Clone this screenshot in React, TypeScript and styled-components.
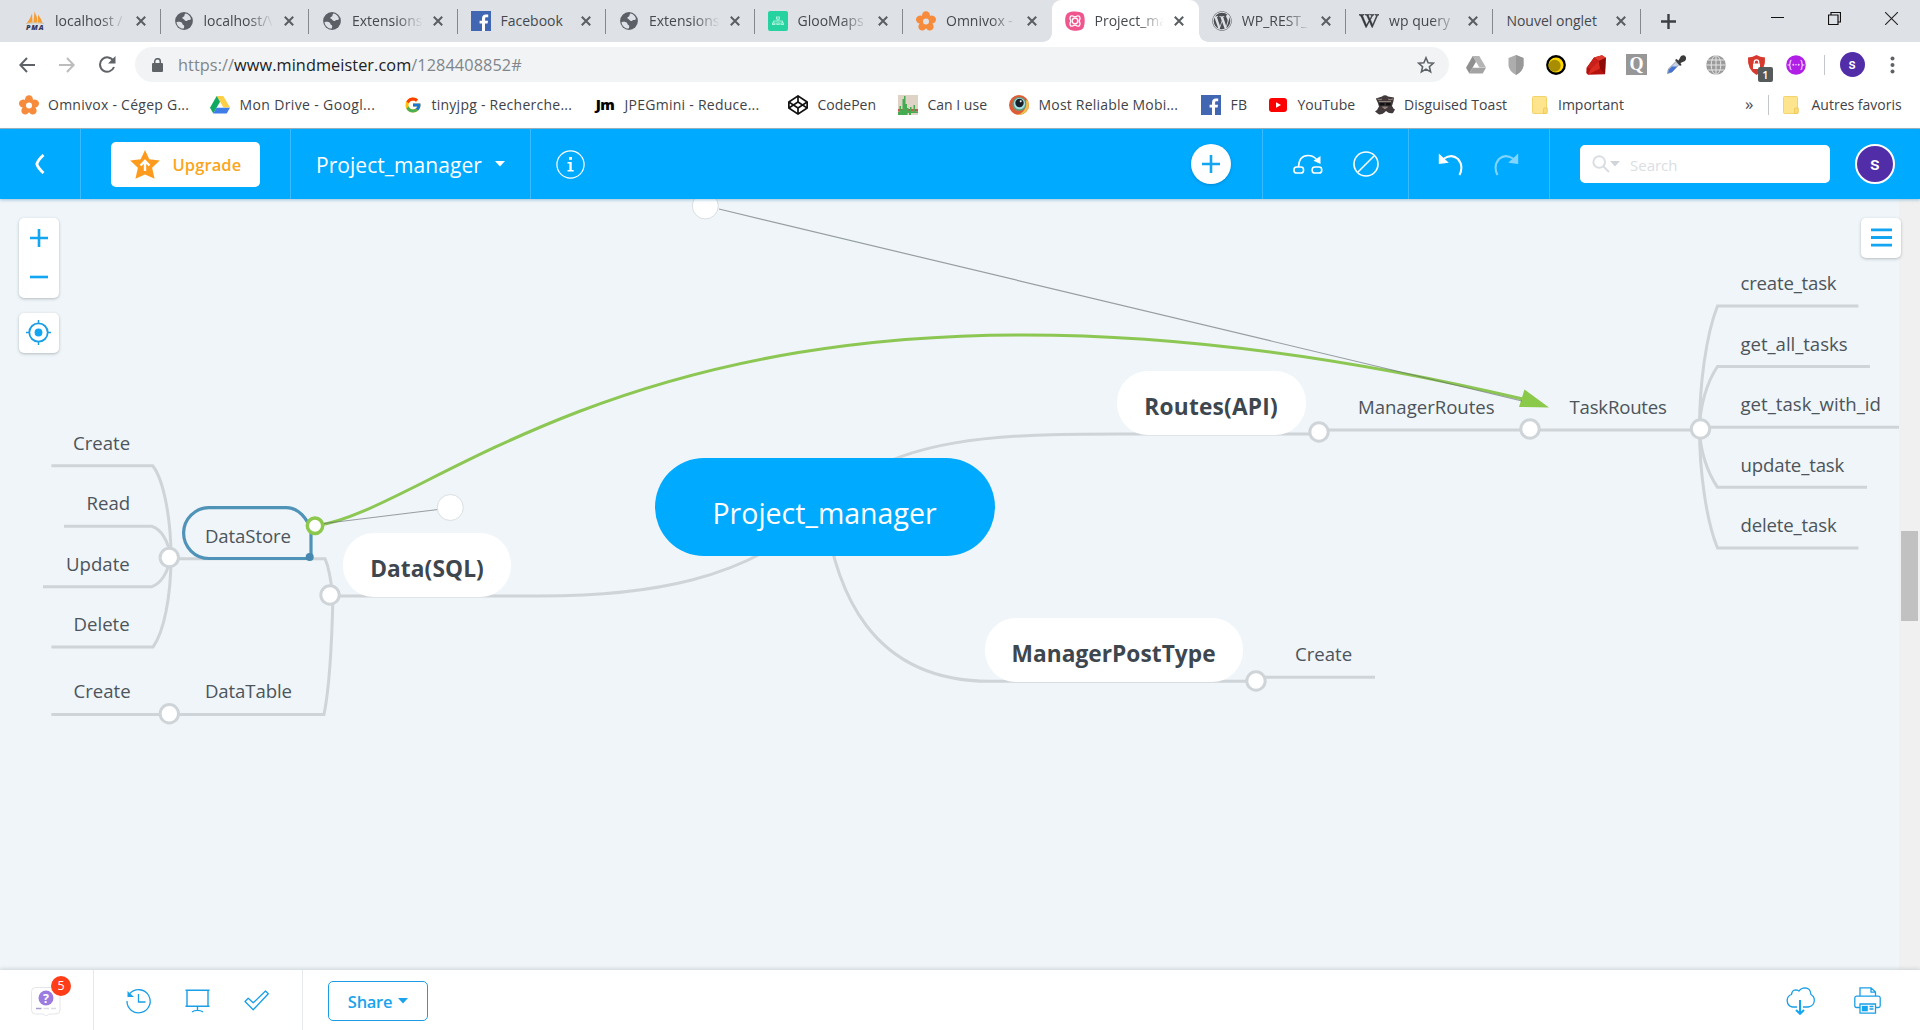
import React from 'react';
import styled, { createGlobalStyle, css } from 'styled-components';
import { FaWordpress, FaWikipediaW, FaCodepen } from 'react-icons/fa';
import { FcGoogle } from 'react-icons/fc';

const blue = '#00aaff';
const line = '#cfd4d8';
const ui = "'Open Sans', 'Noto Sans', sans-serif";

const Global = createGlobalStyle`
  * { box-sizing: border-box; }
  html, body { margin: 0; height: 100%; overflow: hidden; }
  body { font-family: ${ui}; background: #fff; }
  svg { display: block; flex: none; }
`;

const Screen = styled.div`
  width: 1920px;
  height: 1030px;
  display: flex;
  flex-direction: column;
  overflow: hidden;
`;

/* ---------- browser tabs ---------- */

const TabStrip = styled.div`
  height: 42px;
  flex: none;
  display: flex;
  align-items: stretch;
  background: #dee1e6;
  padding-left: 12px;
`;

const Tab = styled.div<{ $active?: boolean; $divider?: boolean; $narrow?: boolean }>`
  position: relative;
  width: ${p => (p.$narrow ? 147.3 : 148.5)}px;
  flex: none;
  display: flex;
  align-items: center;
  padding: 0 15px 0 13px;
  gap: 10px;
  ${p => p.$active && css`
    background: #fff;
    border-radius: 9px 9px 0 0;
    &::before, &::after {
      content: '';
      position: absolute;
      bottom: 0;
      width: 9px;
      height: 9px;
    }
    &::before { left: -9px; background: radial-gradient(circle at 0 0, transparent 8.5px, #fff 9px); }
    &::after { right: -9px; background: radial-gradient(circle at 100% 0, transparent 8.5px, #fff 9px); }
  `}
  ${p => p.$divider && css`
    &::after {
      content: '';
      position: absolute;
      right: 0;
      top: 9px;
      width: 1px;
      height: 25px;
      background: #85888c;
    }
  `}
`;

const TabTitle = styled.span<{ $fade?: boolean }>`
  flex: 1;
  min-width: 0;
  overflow: hidden;
  white-space: nowrap;
  font-size: 14px;
  line-height: 22px;
  color: #45494d;
  ${p => p.$fade && css`
    mask-image: linear-gradient(90deg, #000 62%, transparent 100%);
  `}
`;

const NewTab = styled.div`
  width: 55px;
  display: flex;
  align-items: center;
  justify-content: center;
`;

const WindowControls = styled.div`
  margin-left: auto;
  display: flex;
  height: 37px;
`;

const WindowButton = styled.div`
  width: 57px;
  display: flex;
  align-items: center;
  justify-content: center;
`;

/* ---------- address bar ---------- */

const Toolbar = styled.div`
  height: 45px;
  flex: none;
  display: flex;
  align-items: center;
  background: #fff;
`;

const NavButtons = styled.div`
  width: 135px;
  padding-left: 7px;
  display: flex;
`;

const ToolCell = styled.div<{ $w?: number }>`
  position: relative;
  width: ${p => p.$w ?? 40}px;
  height: 40px;
  flex: none;
  display: flex;
  align-items: center;
  justify-content: center;
`;

const Omnibox = styled.div`
  width: 1313.5px;
  height: 35px;
  flex: none;
  display: flex;
  align-items: center;
  border-radius: 18px;
  background: #f1f3f4;
  padding: 0 14px 0 17px;
  margin-right: 7.5px;
`;

const Url = styled.span`
  flex: 1;
  margin-left: 15px;
  font-size: 16.3px;
  line-height: 24px;
  letter-spacing: 0.07px;
  color: #80868b;
  b { font-weight: 400; color: #202124; }
`;

const CountBadge = styled.span`
  position: absolute;
  left: 22px;
  top: 22px;
  width: 15px;
  height: 15px;
  border-radius: 2px;
  background: #555a5a;
  color: #fff;
  font: 600 11px/15px ${ui};
  text-align: center;
`;

const Rule = styled.i<{ $h: number; $mr?: number }>`
  width: 1px;
  height: ${p => p.$h}px;
  margin-right: ${p => p.$mr ?? 0}px;
  background: #c4c7ca;
  flex: none;
`;

const Avatar = styled.div<{ $size: number; $ring?: number }>`
  width: ${p => p.$size}px;
  height: ${p => p.$size}px;
  flex: none;
  border-radius: 50%;
  border: ${p => p.$ring ?? 0}px solid #fff;
  background: #512da8;
  color: #fff;
  display: flex;
  align-items: center;
  justify-content: center;
  padding-bottom: 2px;
  font-family: Roboto, sans-serif;
  font-weight: 500;
  font-size: ${p => (p.$ring ? 19 : 14)}px;
`;

/* ---------- bookmarks ---------- */

const Bookmarks = styled.div`
  height: 42px;
  flex: none;
  display: flex;
  align-items: center;
  padding: 0 0 5px 18.5px;
  background: #fff;
  border-bottom: 1px solid #9fb3bf;
`;

const Bookmark = styled.div<{ $w: number; $gap?: number }>`
  width: ${p => p.$w}px;
  flex: none;
  display: flex;
  align-items: center;
  gap: ${p => p.$gap ?? 9.5}px;
`;

const BookmarkIcon = styled.span<{ $w?: number }>`
  width: ${p => p.$w ?? 20}px;
  height: 20px;
  flex: none;
  display: flex;
  align-items: center;
  justify-content: center;
`;

const BookmarkLabel = styled.span<{ $ls?: number }>`
  font-size: 14px;
  line-height: 20px;
  white-space: nowrap;
  letter-spacing: ${p => p.$ls ?? 0}px;
  color: #3f4347;
`;

const Jm = styled.b`
  font: 800 14.5px/20px ${ui};
  letter-spacing: -0.6px;
  color: #000;
`;

const Overflow = styled.span`
  width: 23px;
  font-size: 17px;
  line-height: 20px;
  padding-bottom: 3px;
  color: #4a4d51;
`;

const BookmarksEnd = styled.div`
  margin-left: auto;
  width: 175px;
  display: flex;
  align-items: center;
`;

/* ---------- app header ---------- */

const Header = styled.header`
  position: relative;
  z-index: 2;
  height: 70px;
  flex: none;
  display: flex;
  background: ${blue};
  box-shadow: 0 1px 3px rgba(0, 100, 160, 0.35);
`;

const HeaderCell = styled.div<{ $w?: number; $pl?: number; $rule?: boolean; $gap?: number }>`
  ${p => (p.$w ? `width: ${p.$w}px; flex: none;` : 'flex: 1;')}
  display: flex;
  align-items: center;
  padding-left: ${p => p.$pl ?? 0}px;
  gap: ${p => p.$gap ?? 0}px;
  border-right: ${p => (p.$rule ? 1 : 0)}px solid rgba(255, 255, 255, 0.22);
`;

const UpgradeButton = styled.div`
  width: 149px;
  height: 45px;
  border-radius: 5px;
  background: #fff;
  display: flex;
  align-items: center;
  padding-left: 19px;
  gap: 12.5px;
  color: #fba51c;
  font-size: 16.5px;
  font-weight: 600;
  letter-spacing: 0.1px;
`;

const MapTitle = styled.span`
  font-size: 21px;
  line-height: 28px;
  margin-top: 1px;
  letter-spacing: 0.05px;
  color: #fff;
`;

const RoundButton = styled.div`
  width: 40px;
  height: 40px;
  border-radius: 50%;
  background: #fff;
  display: flex;
  align-items: center;
  justify-content: center;
  box-shadow: 0 1px 3px rgba(0, 60, 110, 0.3);
`;

const SearchBox = styled.div`
  width: 250px;
  height: 38px;
  border-radius: 5px;
  background: #fff;
  display: flex;
  align-items: center;
  padding-left: 12px;
  color: #dadee3;
  font-size: 15px;
  span { margin: 2px 0 0 10px; }
`;

/* ---------- canvas ---------- */

const Workspace = styled.main`
  height: 771px;
  flex: none;
  display: flex;
`;

const Canvas = styled.div`
  position: relative;
  width: 1899px;
  background: #eff5f8;
`;

const Scrollbar = styled.div`
  width: 21px;
  background: #f0f0f0;
  padding: 332px 2px 0;
`;

const Thumb = styled.div`
  height: 90px;
  background: #c1c1c1;
`;

const Wires = styled.svg`
  position: absolute;
  inset: 0;
`;

const Float = styled.div<{ $x: number; $y: number; $h: number }>`
  position: absolute;
  left: ${p => p.$x}px;
  top: ${p => p.$y}px;
  width: 40px;
  height: ${p => p.$h}px;
  padding-bottom: 1px;
  display: flex;
  flex-direction: column;
  align-items: center;
  justify-content: space-around;
  background: #fff;
  border-radius: 5px;
  box-shadow: 0 1px 3px rgba(70, 80, 90, 0.35);
`;

const Topic = styled.div<{ $x: number; $y: number; $ls: number }>`
  position: absolute;
  left: ${p => p.$x}px;
  top: ${p => p.$y}px;
  font-size: 18.6px;
  line-height: 24px;
  white-space: nowrap;
  letter-spacing: ${p => p.$ls}px;
  color: #4d545b;
`;

const Branch = styled.div<{ $x: number; $y: number; $w: number; $ls: number }>`
  position: absolute;
  left: ${p => p.$x}px;
  top: ${p => p.$y}px;
  width: ${p => p.$w}px;
  height: 64px;
  border-radius: 31px;
  background: #fff;
  display: flex;
  justify-content: center;
  padding-top: 19px;
  font-size: 22.7px;
  font-weight: 700;
  line-height: 34px;
  letter-spacing: ${p => p.$ls}px;
  color: #3e464e;
`;

const Root = styled.div`
  position: absolute;
  left: 654.5px;
  top: 259.3px;
  width: 340px;
  height: 98px;
  border-radius: 49px;
  background: ${blue};
  display: flex;
  justify-content: center;
  padding-top: 34.7px;
  font-size: 28.5px;
  line-height: 40px;
  color: #fff;
`;

/* ---------- bottom bar ---------- */

const BottomBar = styled.footer`
  position: relative;
  z-index: 2;
  height: 60px;
  flex: none;
  display: flex;
  background: #fff;
  box-shadow: 0 -1px 4px rgba(60, 80, 90, 0.2);
`;

const BottomCell = styled.div<{ $w?: number; $pl?: number; $pr?: number; $gap?: number; $rule?: boolean }>`
  ${p => (p.$w ? `width: ${p.$w}px; flex: none;` : 'margin-left: auto;')}
  display: flex;
  align-items: center;
  padding: 1px ${p => p.$pr ?? 0}px 0 ${p => p.$pl ?? 0}px;
  gap: ${p => p.$gap ?? 0}px;
  border-right: ${p => (p.$rule ? 1 : 0)}px solid #e6eaed;
`;

const HelpBox = styled.div`
  position: relative;
  width: 31px;
  height: 30px;
`;

const Badge = styled.span`
  position: absolute;
  left: 20px;
  top: -10px;
  width: 20px;
  height: 20px;
  border-radius: 50%;
  background: #ff3d18;
  color: #fff;
  font-size: 12.5px;
  line-height: 20px;
  text-align: center;
`;

const ShareButton = styled.div`
  width: 100px;
  height: 40px;
  margin-top: 1px;
  border: 1px solid #1a9de4;
  border-radius: 5px;
  display: flex;
  align-items: center;
  justify-content: center;
  gap: 6px;
  color: #1aa3ec;
  font-size: 16.5px;
  font-weight: 600;
  letter-spacing: -0.3px;
`;

/* ---------- drawings ---------- */

const Close = () => (
  <svg width="10" height="10" viewBox="0 0 10 10"><path d="M.8.8l8.4 8.4M9.2.8L.8 9.2" stroke="#5a5e63" strokeWidth="2" /></svg>
);

const Pma = () => (
  <svg width="20" height="20" viewBox="0 0 20 20">
    <path d="M2 12Q5.500 7.500 7 2.500L7.500 11.500zM8.500 11.500L9.500.5Q12.500 6 12.500 11.500zM13 11.500V3.500Q16.500 8 17.500 12z" fill="#f59c33" />
    <path d="M1 12.500Q10 11 19 12.500" stroke="#c9b98f" strokeWidth=".7" fill="none" />
    <text x="1" y="18.800" fontFamily="Open Sans" fontWeight="800" fontStyle="italic" fontSize="7.200" fill="#33365e" textLength="17.500">PMA</text>
  </svg>
);

const Globe = () => (
  <svg width="20" height="20" viewBox="0 0 20 20">
    <circle cx="10" cy="10" r="8.900" fill="#5c6066" />
    <path d="M2.500 11.200c2-.6 4.300-.4 5.300.6 1 1 .6 2 1.600 2.200 1.300.3.800 2.500.4 3.600-3.600.2-7-2.700-7.300-6.400zM11.600 2.600c2.300.4 4.700 2.300 5.400 5.400-.9 1.600-2.600.5-3.600 1.500s-2.200.6-2.900-.6c-.8-1.300-2.300-.7-2.200-2.100.1-1.300 2.200-1 2.200-2.400 0-.8.500-1.600 1.100-1.800z" fill="#dee1e6" />
  </svg>
);

const FacebookMark = () => (
  <svg width="20" height="20" viewBox="0 0 20 20">
    <rect width="20" height="20" fill="#4267b2" />
    <path d="M11 20v-7.400H8.600V9.700H11V7.600c0-2.600 1.500-4 3.900-4h2.300v2.700h-1.600c-1.300 0-1.500.7-1.500 1.600v1.800h2.900l-.4 2.900H14V20z" fill="#fff" />
  </svg>
);

const Gloo = () => (
  <svg width="20" height="20" viewBox="0 0 20 20">
    <rect width="20" height="20" rx="2" fill="#26d3a0" />
    <g fill="none" stroke="#b5f5df" strokeWidth=".9"><rect x="8.500" y="6" width="3" height="2" /><path d="M10 8v2M5.500 12v-2h9v2" /><rect x="4.500" y="12" width="2.500" height="1.500" /><rect x="8.800" y="12" width="2.500" height="1.500" /><rect x="13" y="12" width="2.500" height="1.500" /></g>
  </svg>
);

const Flower = ({ hole = '#fff' }: { hole?: string }) => (
  <svg width="20" height="20" viewBox="0 0 20 20">
    <g fill="#f68b3c">{[0, 72, 144, 216, 288].map(a => <ellipse key={a} cx="10" cy="4.600" rx="4" ry="4.400" transform={`rotate(${a} 10 10.5)`} />)}</g>
    <circle cx="10" cy="10.500" r="3" fill={hole} />
  </svg>
);

const MindMeister = () => (
  <svg width="20" height="20" viewBox="0 0 20 20">
    <path d="M6 .8C10 0 16 .5 18 2.500c2 2.500 2.300 9 .8 13.500C17.500 19.500 12 20.300 7.500 19.500 2.500 18.500.3 15 .2 10 .1 5 1.500 1.600 6 .8z" fill="#f0568e" />
    <g fill="none" stroke="#fff" strokeWidth="1.300"><circle cx="10" cy="10" r="2.800" /><path d="M7.800 5Q10 6.600 12.200 5 15 4 15 7.800 13.400 10 15 12.200 15 16 12.200 15 10 13.400 7.800 15 4.800 16 5 12.200 6.600 10 5 7.800 4.800 4 7.800 5z" /></g>
  </svg>
);

const Drive = ({ grey }: { grey?: boolean }) => (
  <svg width="20" height="18" viewBox="0 0 20 18">
    <path d="M6.700 0h6.600L20 11.500h-6.600z" fill={grey ? '#b5b5b5' : '#ffcf48'} />
    <path d="M6.700 0L10 5.800 3.300 17.500 0 11.700z" fill={grey ? '#8f8f8f' : '#11a861'} />
    <path d="M6.600 11.700H20l-3.300 5.800H3.300z" fill={grey ? '#a3a3a3' : '#3e7de8'} />
  </svg>
);

const CanIUse = () => (
  <svg width="20" height="20" viewBox="0 0 20 20">
    <rect width="20" height="20" fill="#ded3c4" />
    <path d="M0 14h20v2.500H0z" fill="#c4564a" />
    <path d="M0 20v-3h1.500v-6H3v4h1.500V4H6V1h1.500v8H9v4h1.500v3H12v-4h1.500v4.500h2V10h1.500v6.500h3V18H13v2h-2v-2H9.500v2z" fill="#45ab50" />
  </svg>
);

const Eye = () => (
  <svg width="20" height="20" viewBox="0 0 20 20">
    <circle cx="10" cy="10" r="10" fill="#df5b36" />
    <path d="M19 6a10 10 0 0 1-12 13.500C13 20 18 14 17 5z" fill="#efc04d" />
    <circle cx="10.300" cy="9" r="7" fill="#5f9e7c" />
    <circle cx="10.500" cy="8.700" r="5.600" fill="#a9dfe8" />
    <circle cx="10.500" cy="8" r="4.200" fill="#15212b" />
    <circle cx="11.700" cy="6.300" r="1" fill="#fff" />
  </svg>
);

const YouTube = () => (
  <svg width="18" height="14" viewBox="0 0 18 14"><rect width="18" height="14" rx="3" fill="#f00" /><path d="M7 4.200v5.600L12 7z" fill="#fff" /></svg>
);

const Toast = () => (
  <svg width="20" height="20" viewBox="0 0 20 20">
    <path d="M7 1.500Q10-1 13 1.500L19 2.500 18.500 6 17 11l1.500 2.500 1.500 1-2 3.500q-4 1-7-2-3 3.500-7 3.500L0 16.500l2-1.500 2-3.500L2.500 7 .8 3.500z" fill="#41393b" />
    <path d="M2.500 4Q5 5.500 7 4M13 4q2 1.500 5 0M4 6.500h12M7.500 12h5l-2.500 1.800z" fill="#94847c" stroke="#94847c" />
    <path d="M4.500 8h5v2.500h-5zM10.700 8h5v2.500h-5z" fill="#111" />
  </svg>
);

const Folder = () => (
  <svg width="16" height="18" viewBox="0 0 16 18"><rect x=".5" y=".5" width="14" height="17" rx="1" fill="#fee48d" stroke="#f3d36c" /><path d="M11.500 17.500v-4.500q0-1 1-1h2.800v4.500q0 1-1 1z" fill="#fbdc74" stroke="#e8c65c" strokeWidth=".8" /></svg>
);

const Caret = ({ fill, w = 10 }: { fill: string; w?: number }) => (
  <svg width={w} height="6" viewBox="0 0 10 6"><path d="M0 0h10L5 5.500z" fill={fill} /></svg>
);

const Extensions = () => (
  <>
    <ToolCell><Drive grey /></ToolCell>
    <ToolCell><svg width="16" height="20" viewBox="0 0 16 20"><path d="M8 0l7.500 3v7.500Q15 16 8 20 1 16 .5 10.500V3z" fill="#adadad" /><path d="M8 0l7.500 3v7.500Q15 16 8 20z" fill="#989898" /></svg></ToolCell>
    <ToolCell><svg width="20" height="20" viewBox="0 0 20 20"><circle cx="10" cy="10" r="9.900" fill="#000" /><circle cx="10" cy="10" r="7.600" fill="#ffd800" /><circle cx="8.700" cy="10.800" r="6" fill="#a88d00" /></svg></ToolCell>
    <ToolCell><svg width="20" height="20" viewBox="0 0 20 20"><path d="M8 2.500L16 .3l3.800 2.400L19 19.300 2 19.800 .3 18 .5 13z" fill="#b3120d" /><path d="M8 2.500L16 .3l3.800 2.400L13 6z" fill="#e03a2e" /><path d="M8 2.500L13 6 5 13.500.5 13z" fill="#c8201a" /><path d="M5 13.500L13 6l1 7.500L2 19.800z" fill="#d92b20" /><path d="M13 6l6.800-3.300L19 19.300l-5-5.800z" fill="#8f0b08" /></svg></ToolCell>
    <ToolCell><svg width="21" height="21" viewBox="0 0 21 21"><rect width="21" height="21" fill="#979797" /><text x="10.500" y="16" textAnchor="middle" fontFamily="Liberation Serif" fontWeight="700" fontSize="18" fill="#fff">Q</text></svg></ToolCell>
    <ToolCell><svg width="20" height="20" viewBox="0 0 20 20"><path d="M1.500 18.500l1-4.500 7.500-7.500 3 3L6 17z" fill="#c5d4ea" stroke="#7b8794" strokeWidth=".8" /><path d="M2 18l1-3.500L6 11.500h5L6 17z" fill="#4472d6" /><path d="M9 5l1.500-1 2 1.500L15 1q3-1.500 4.500.5T19 6l-4.500 2 1 2-1.500 1z" fill="#3b3b3b" /></svg></ToolCell>
    <ToolCell><svg width="20" height="20" viewBox="0 0 20 20"><circle cx="10" cy="10" r="9.800" fill="#9b9b9b" /><g fill="none" stroke="#e4e4e4" strokeWidth="1"><ellipse cx="10" cy="10" rx="4.800" ry="9.500" /><path d="M10 0v20M0 10h20M2 5h16M2 15h16" /></g></svg></ToolCell>
    <ToolCell>
      <svg width="19" height="20" viewBox="0 0 19 20"><path d="M9.500 0Q13 2 18 2.500q1 12-8.500 17.500Q0 14.500 1 2.500 6 2 9.500 0z" fill="#d63a2f" /><rect x="6" y="8.500" width="7" height="5.500" fill="#fff" /><path d="M7.300 8.500V7a2.200 2.200 0 0 1 4.400 0v1.500" fill="none" stroke="#fff" strokeWidth="1.200" /></svg>
      <CountBadge>1</CountBadge>
    </ToolCell>
    <ToolCell><svg width="20" height="20" viewBox="0 0 20 20"><circle cx="10" cy="10" r="9.800" fill="#b01fe6" /><g fill="none" stroke="#f1c8ff" strokeWidth="1.300"><path d="M5.500 5.500q-1.500 0-1.300 2 .2 2-1.500 2.500 1.700.5 1.500 2.500-.2 2 1.300 2M14.500 5.500q1.500 0 1.300 2-.2 2 1.500 2.500-1.700.5-1.500 2.500.2 2-1.300 2" /></g><g fill="#f1c8ff"><circle cx="7.300" cy="9.700" r="1" /><circle cx="10" cy="9.700" r=".8" /><circle cx="12.700" cy="9.700" r="1" /></g></svg></ToolCell>
  </>
);

const tabs: { t: string; i?: React.ReactNode; fade?: boolean; active?: boolean; div?: boolean }[] = [
  { t: 'localhost / ', i: <Pma />, fade: true, div: true },
  { t: 'localhost/\\', i: <Globe />, fade: true, div: true },
  { t: 'Extensions', i: <Globe />, fade: true, div: true },
  { t: 'Facebook', i: <FacebookMark />, div: true },
  { t: 'Extensions', i: <Globe />, fade: true, div: true },
  { t: 'GlooMaps', i: <Gloo />, fade: true, div: true },
  { t: 'Omnivox - ', i: <Flower hole="#dee1e6" />, fade: true },
  { t: 'Project_ma', i: <MindMeister />, fade: true, active: true },
  { t: 'WP_REST_', i: <FaWordpress size={20} color="#4c5055" />, fade: true, div: true },
  { t: 'wp query ', i: <FaWikipediaW size={20} color="#34373b" stroke="#34373b" strokeWidth={18} />, fade: true, div: true },
  { t: 'Nouvel onglet', div: true },
];

const marks: { t: string; w: number; i: React.ReactNode; ls?: number; iw?: number }[] = [
  { t: 'Omnivox - Cégep G...', w: 191.5, i: <Flower />, ls: 0.26 },
  { t: 'Mon Drive - Googl...', w: 194, i: <Drive />, ls: 0.36 },
  { t: 'tinyjpg - Recherche...', w: 191, i: <FcGoogle size={18} />, ls: 0.25, iw: 18 },
  { t: 'JPEGmini - Reduce...', w: 193, i: <Jm>Jm</Jm>, ls: 0.26 },
  { t: 'CodePen', w: 110, i: <FaCodepen size={20} color="#111" /> },
  { t: 'Can I use', w: 111, i: <CanIUse /> },
  { t: 'Most Reliable Mobi...', w: 192, i: <Eye />, ls: 0.2 },
  { t: 'FB', w: 67, i: <FacebookMark />, ls: 0.2 },
  { t: 'YouTube', w: 106.5, i: <YouTube /> },
  { t: 'Disguised Toast', w: 156, i: <Toast />, ls: 0.05 },
  { t: 'Important', w: 120, i: <Folder />, iw: 18 },
];

/* label, left edge, baseline, tracking */
const topics: [string, number, number, number][] = [
  ['Create', 73, 450, 0],
  ['Read', 86.5, 510.5, 0],
  ['Update', 66, 571, 0],
  ['Delete', 73.5, 631.5, 0],
  ['Create', 73.5, 698, 0],
  ['DataStore', 205, 543, -0.12],
  ['DataTable', 205, 698, -0.12],
  ['ManagerRoutes', 1358, 414, -0.03],
  ['TaskRoutes', 1569.5, 414, -0.2],
  ['create_task', 1740.5, 290, -0.2],
  ['get_all_tasks', 1740.5, 351, -0.05],
  ['get_task_with_id', 1740.5, 411, 0],
  ['update_task', 1740.5, 472, -0.15],
  ['delete_task', 1740.5, 532, -0.15],
  ['Create', 1295, 661, 0],
];

const joints = [[169.3, 557.5], [330, 595], [169.3, 713.7], [1319, 432], [1530, 429], [1700.5, 429], [1256, 681]];

const MapWires = () => (
  <Wires width="1899" height="771" viewBox="0 199 1899 771">
    <g fill="none" stroke={line} strokeWidth="3">
      <path d="M824 507C750 583 640 596 540 596H331" />
      <path d="M824 507C885 434 1010 434 1120 434H1319" />
      <path d="M824 507C835 590 870 681.300 990 681.300H1256" />
      <path d="M1256 677.300H1375" />
      <path d="M1319 430H1530M1530 430H1700" />
      <path d="M51.400 465.700H152.700C164 480 171 520 171 557" />
      <path d="M64 526.300H152Q166 531 171 557" />
      <path d="M43 586.700H152Q166 581 171 557" />
      <path d="M51.400 647H153C164 632 171 596 171 557" />
      <path d="M169 558.700H325Q330 570 332.500 595" />
      <path d="M51.400 714.500H324C329 690 332 640 333 595" />
      <path d="M1858.400 306H1717.500C1706 335 1699.500 385 1699.500 429" />
      <path d="M1870 366.500H1717.500C1707 382 1700 405 1699.500 429" />
      <path d="M1699 427.300H1899" />
      <path d="M1867 487.300H1717.500C1707 472 1700 450 1699.500 429" />
      <path d="M1858.400 548H1717.500C1706 520 1699.500 470 1699.500 429" />
    </g>
    <path d="M209 507.700H286.500C299 507.700 307 519 311 530V558.500H209A25.400 25.400 0 0 1 209 507.700Z" fill="none" stroke="#4f93b9" strokeWidth="3.200" />
    <circle cx="309.700" cy="557" r="4" fill="#4788b0" />
    <g fill="#fff" stroke={line} strokeWidth="3">
      {joints.map(([x, y]) => <circle key={`${x}-${y}`} cx={x} cy={y} r="9.200" />)}
    </g>
  </Wires>
);

const ConnectionWires = () => (
  <Wires width="1899" height="771" viewBox="0 199 1899 771">
    <path d="M315 526C450 507.500 705 206 1524 399.300" fill="none" stroke="#8cc653" strokeWidth="3" />
    <path d="M1549 407.500L1524.500 389.500 1519 407z" fill="#8bc94a" />
    <path d="M324 523.500L438 509.500M719 209L1522 401" stroke="#5c6469" strokeOpacity=".6" strokeWidth="1.200" />
    <circle cx="450.300" cy="507.500" r="13" fill="#fff" stroke="#d9dee1" />
    <circle cx="705.300" cy="206" r="13" fill="#fff" stroke="#d9dee1" />
    <circle cx="315" cy="525.700" r="7.700" fill="#fff" stroke="#8bc84b" strokeWidth="3.500" />
  </Wires>
);

const PlusMark = () => (
  <svg width="18" height="18" viewBox="0 0 18 18"><path d="M9 0v18M0 9h18" stroke="#12a5f2" strokeWidth="2.600" /></svg>
);

export default function App() {
  return (
    <Screen>
      <Global />
      <TabStrip>
        {tabs.map((tab, n) => (
          <Tab key={n} $active={tab.active} $divider={tab.div} $narrow={n > 6}>
            {tab.i}
            <TabTitle $fade={tab.fade}>{tab.t}</TabTitle>
            <Close />
          </Tab>
        ))}
        <NewTab><svg width="15" height="15" viewBox="0 0 15 15"><path d="M7.500 0v15M0 7.500h15" stroke="#3c4043" strokeWidth="2.400" /></svg></NewTab>
        <WindowControls>
          <WindowButton><svg width="13" height="13" viewBox="0 0 13 13"><path d="M0 5.500h13" stroke="#111" /></svg></WindowButton>
          <WindowButton><svg width="13" height="13" viewBox="0 0 13 13"><path d="M.5 3h9.500v9.500H.5zM3 3V.5h9.500V10H10" fill="none" stroke="#111" strokeWidth="1.200" /></svg></WindowButton>
          <WindowButton><svg width="13" height="13" viewBox="0 0 13 13"><path d="M0 0l13 13M13 0L0 13" stroke="#222" strokeWidth="1.100" /></svg></WindowButton>
        </WindowControls>
      </TabStrip>

      <Toolbar>
        <NavButtons>
          <ToolCell><svg width="16" height="16" viewBox="0 0 16 16"><path d="M16 8H1.500M8 1L1.300 8 8 15" fill="none" stroke="#5f6368" strokeWidth="2" /></svg></ToolCell>
          <ToolCell><svg width="16" height="16" viewBox="0 0 16 16"><path d="M0 8h14.500M8 1l6.700 7L8 15" fill="none" stroke="#babcbe" strokeWidth="2" /></svg></ToolCell>
          <ToolCell><svg width="18" height="18" viewBox="0 0 18 18"><path d="M15.500 5A7.200 7.200 0 1 0 16 11" fill="none" stroke="#5f6368" strokeWidth="2" /><path d="M17.500 0v7.500H10z" fill="#5f6368" /></svg></ToolCell>
        </NavButtons>
        <Omnibox>
          <svg width="11" height="14" viewBox="0 0 11 14"><rect y="5" width="11" height="9" rx="1" fill="#5f6368" /><path d="M2.700 6V3.500a2.800 2.800 0 0 1 5.600 0V6" fill="none" stroke="#5f6368" strokeWidth="1.500" /></svg>
          <Url>https://<b>www.mindmeister.com</b>/1284408852#</Url>
          <svg width="18" height="18" viewBox="0 0 18 18"><path d="M9 1.800l2.100 4.900 5.300.5-4 3.500 1.200 5.200L9 13.100l-4.600 2.800 1.200-5.200-4-3.500 5.300-.5z" fill="none" stroke="#5f6368" strokeWidth="1.600" /></svg>
        </Omnibox>
        <Extensions />
        <ToolCell $w={16}><Rule $h={20} /></ToolCell>
        <ToolCell $w={40}><Avatar $size={25}>s</Avatar></ToolCell>
        <ToolCell $w={40}><svg width="5" height="18" viewBox="0 0 5 18"><g fill="#5f6368"><circle cx="2.500" cy="2.500" r="2" /><circle cx="2.500" cy="9" r="2" /><circle cx="2.500" cy="15.500" r="2" /></g></svg></ToolCell>
      </Toolbar>

      <Bookmarks>
        {marks.map(m => (
          <Bookmark key={m.t} $w={m.w}>
            <BookmarkIcon $w={m.iw}>{m.i}</BookmarkIcon>
            <BookmarkLabel $ls={m.ls}>{m.t}</BookmarkLabel>
          </Bookmark>
        ))}
        <BookmarksEnd>
          <Overflow>»</Overflow>
          <Rule $h={20} $mr={14} />
          <Bookmark $w={130} $gap={12.5}>
            <BookmarkIcon $w={16}><Folder /></BookmarkIcon>
            <BookmarkLabel>Autres favoris</BookmarkLabel>
          </Bookmark>
        </BookmarksEnd>
      </Bookmarks>

      <Header>
        <HeaderCell $w={81} $pl={35} $rule><svg width="10" height="20" viewBox="0 0 10 20"><path d="M8.500 1Q3 6 1.800 10 3 14 8.500 19" fill="none" stroke="#fff" strokeWidth="2.800" /></svg></HeaderCell>
        <HeaderCell $w={210} $pl={30} $rule>
          <UpgradeButton>
            <svg width="30" height="29" viewBox="0 0 30 29"><path d="M15 0l4.300 9.300 10.500 1.300-7.700 7.200 2.500 11L15 24.500 5.400 28.800l2.500-11L.2 10.600l10.500-1.300z" fill="#ff9b1c" /><path d="M15 21v-9.500M10.500 15.500L15 11l4.500 4.500" fill="none" stroke="#fff" strokeWidth="2.400" /></svg>
            Upgrade
          </UpgradeButton>
        </HeaderCell>
        <HeaderCell $w={240} $pl={25} $gap={13} $rule><MapTitle>Project_manager</MapTitle><Caret fill="#fff" /></HeaderCell>
        <HeaderCell $pl={25}>
          <svg width="29" height="29" viewBox="0 0 29 29"><circle cx="14.500" cy="14.500" r="13.600" fill="none" stroke="#fff" strokeWidth="1.200" /><rect x="13" y="7" width="3" height="2.800" fill="#fff" /><path d="M11.500 12h4.200v8h2v1.600h-6.200V20h1.900v-6.400h-1.900z" fill="#fff" /></svg>
        </HeaderCell>
        <HeaderCell $w={72} $rule><RoundButton><PlusMark /></RoundButton></HeaderCell>
        <HeaderCell $w={146} $pl={30} $gap={30} $rule>
          <svg width="30" height="20" viewBox="0 0 30 20"><g fill="none" stroke="#fff" strokeWidth="1.600"><rect x="1" y="13" width="9.500" height="6" rx="2.600" /><rect x="19.200" y="13" width="9.500" height="6" rx="2.600" /><path d="M5.500 13Q6 1.500 15 1.500q5.500 0 8.500 4" /></g><path d="M27.500 2v8l-7-3.300z" fill="#fff" /></svg>
          <svg width="26" height="26" viewBox="0 0 26 26"><g fill="none" stroke="#fff" strokeWidth="1.600"><circle cx="13" cy="13" r="12" /><path d="M21 5L5 21" /></g></svg>
        </HeaderCell>
        <HeaderCell $w={141} $pl={29} $gap={31} $rule>
          <svg width="25" height="23" viewBox="0 0 25 23"><path d="M6 5.500Q14 .5 20 6q6 7 1.500 16" fill="none" stroke="#fff" strokeWidth="2" /><path d="M.8.5v10.500l10-1.200z" fill="#fff" /></svg>
          <svg width="25" height="23" viewBox="0 0 25 23" opacity=".5"><path d="M19 5.500Q11 .5 5 6q-6 7-1.500 16" fill="none" stroke="#fff" strokeWidth="2" /><path d="M24.200.5v10.500l-10-1.200z" fill="#fff" /></svg>
        </HeaderCell>
        <HeaderCell $w={370} $pl={30} $gap={25}>
          <SearchBox>
            <svg width="18" height="18" viewBox="0 0 18 18"><g fill="none" stroke="#dadee3" strokeWidth="2"><circle cx="7.200" cy="7" r="5.800" /><path d="M11.500 11.500L17 17" /></g></svg>
            <Caret fill="#d0d5da" />
            <span>Search</span>
          </SearchBox>
          <Avatar $size={40} $ring={2.5}>s</Avatar>
        </HeaderCell>
      </Header>

      <Workspace>
        <Canvas>
          <MapWires />
          <Root>Project_manager</Root>
          <Branch $x={343} $y={334} $w={168} $ls={0.1}>Data(SQL)</Branch>
          <Branch $x={1116.6} $y={171.5} $w={189} $ls={0.2}>Routes(API)</Branch>
          <Branch $x={984.6} $y={419} $w={258} $ls={0.05}>ManagerPostType</Branch>
          {topics.map(([t, x, y, ls], n) => (
            <Topic key={n} $x={x} $y={y - 199 - 19.2} $ls={ls}>{t}</Topic>
          ))}
          <ConnectionWires />
          <Float $x={19} $y={19} $h={80}>
            <PlusMark />
            <svg width="18" height="18" viewBox="0 0 18 18"><path d="M0 9h18" stroke="#12a5f2" strokeWidth="2.600" /></svg>
          </Float>
          <Float $x={19} $y={114} $h={40}>
            <svg width="26" height="26" viewBox="0 0 26 26"><g fill="none" stroke="#1a9fe6" strokeWidth="1.800"><circle cx="12.500" cy="12.500" r="9.200" /><path d="M12.500 0v4M12.500 21v4M0 12.500h4M21 12.500h4" strokeWidth="1.500" /></g><circle cx="12.500" cy="12.500" r="3.900" fill="#12a5f2" /></svg>
          </Float>
          <Float $x={1861} $y={19} $h={40}>
            <svg width="21" height="19" viewBox="0 0 21 19"><path d="M0 1.800h21M0 9.500h21M0 17.200h21" stroke="#12a5f2" strokeWidth="2.800" /></svg>
          </Float>
        </Canvas>
        <Scrollbar><Thumb /></Scrollbar>
      </Workspace>

      <BottomBar>
        <BottomCell $w={94} $pl={31} $rule>
          <HelpBox>
            <svg width="31" height="30" viewBox="0 0 31 30"><path d="M4.500 1.500H25a4 4 0 0 1 4 4V24a4 4 0 0 1-4 4h-7l-3 2-3-2H4.500a4 4 0 0 1-4-4V5.500a4 4 0 0 1 4-4z" fill="#fff" stroke="#e6e6ea" /><circle cx="15" cy="12" r="7.500" fill="#9c7be0" /><text x="15" y="16.500" textAnchor="middle" fontFamily="Open Sans" fontWeight="700" fontSize="12.500" fill="#fff">?</text><path d="M5 22.500h5.500" stroke="#a99ad0" strokeWidth="1.500" /><path d="M12.500 22.500H18M20 22.500h5" stroke="#dcdce4" strokeWidth="1.500" /></svg>
            <Badge>5</Badge>
          </HelpBox>
        </BottomCell>
        <BottomCell $w={209} $pl={32} $gap={34} $rule>
          <svg width="25" height="26" viewBox="0 0 25 26"><g fill="none" stroke="#1a9fe6" strokeWidth="1.300"><path d="M4 5.500A11.600 11.600 0 1 1 1 13" /><path d="M12.500 6v8h7" /></g><path d="M1.500 3v6H8z" fill="#1aa3ec" /></svg>
          <svg width="25" height="24" viewBox="0 0 25 24"><g fill="none" stroke="#1a9fe6" strokeWidth="1.400"><path d="M.5 1.200h24M2 1.500v15.700h21V1.500M12.500 17.500v4M7 23q2-1.600 5.500-1.600T18 23M.5 17.200h24" /></g></svg>
          <svg width="25" height="21" viewBox="0 0 25 21"><path d="M1 11.500l3.200-3.200 5 4.500L21.500 1 24.300 3.700 9.200 19.800z" fill="none" stroke="#1a9fe6" strokeWidth="1.300" strokeLinejoin="round" /></svg>
        </BottomCell>
        <BottomCell $w={160} $pl={25}>
          <ShareButton>Share<Caret fill="#1aa3ec" /></ShareButton>
        </BottomCell>
        <BottomCell $pr={39} $gap={39}>
          <svg width="30" height="28" viewBox="0 0 30 28"><path d="M12 20H7.500A6.500 6.500 0 0 1 6.500 7.500Q7 3 10.500 2.800q2 0 3.500 1.200Q16 .8 20 .8q5.500.2 6 6.700 3.500 2 3.300 6.200-.5 5.500-6 6.300H18" fill="none" stroke="#1a9fe6" strokeWidth="1.300" /><path d="M15 13v13M11 23l4 3.800 4-3.800" fill="none" stroke="#12a5f2" strokeWidth="2" /></svg>
          <svg width="27" height="27" viewBox="0 0 27 27"><g fill="none" stroke="#1a9fe6" strokeWidth="1.300"><path d="M6 9V.8h11L21.500 5v4M17 .8V5.200h4.500M6 20.500H2.500q-1.700 0-1.700-1.700V11q0-1.900 1.700-1.900h22q1.700 0 1.700 1.900v7.800q0 1.700-1.700 1.700H21.500M6 17h15.500v9.200H6z" /><path d="M15.500 19.500h4M15.500 22h4" /></g><rect x="7.800" y="18.800" width="6" height="5.500" fill="#12a5f2" /></svg>
        </BottomCell>
      </BottomBar>
    </Screen>
  );
}
